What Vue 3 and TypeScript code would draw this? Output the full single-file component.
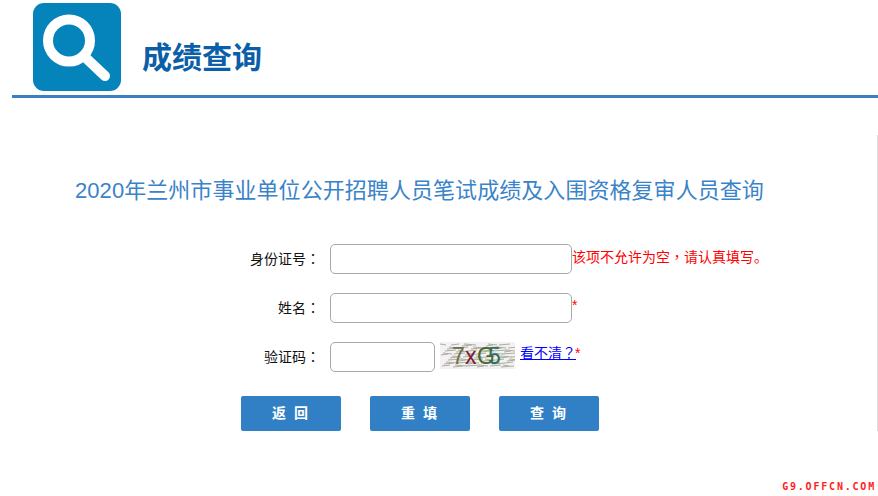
<script setup lang="ts">
const rows = [
  { label: '身份证号', star: false },
  { label: '姓名', star: true },
]
const buttons = ['返 回', '重 填', '查 询']

// captcha background scratches, deterministic so the picture stays the same
const noise = Array.from({ length: 70 }, (_, i) => {
  const x = (i * 37) % 72
  const y = 2 + ((i * 23) % 24)
  return { id: i, d: `M${x} ${y}l${6 + (i % 9)} ${i % 3 === 0 ? 1 : -1}` }
})
</script>

<template>
  <div class="page">
    <header class="header">
      <svg class="logo" viewBox="0 0 88 88" aria-hidden="true">
        <rect width="88" height="88" rx="11" fill="#0583bb" />
        <circle cx="36" cy="37.5" r="21" fill="none" stroke="#fff" stroke-width="10" />
        <path d="M54 56 L72 73" stroke="#fff" stroke-width="10" stroke-linecap="round" />
      </svg>
      <h1 class="brand">成绩查询</h1>
    </header>

    <main class="panel">
      <h2 class="title">2020年兰州市事业单位公开招聘人员笔试成绩及入围资格复审人员查询</h2>

      <form class="form" @submit.prevent>
        <div v-for="row in rows" :key="row.label" class="row">
          <label class="label">{{ row.label }}<span class="punct">：</span></label>
          <input class="field" type="text" />
          <span v-if="row.star" class="star">*</span>
          <span v-else class="note">该项不允许为空<span class="punct">，</span>请认真填写。</span>
        </div>
        <div class="row">
          <label class="label">验证码<span class="punct">：</span></label>
          <input class="field short" type="text" />
          <svg class="captcha" viewBox="0 0 75 27" aria-label="验证码图片">
            <rect width="75" height="27" fill="#f5f0f5" />
            <path v-for="n in noise" :key="n.id" :d="n.d" stroke="#a9b09c" stroke-width="1" />
            <text x="12" y="22" font-size="23" fill="#6b6f4a" class="code">7</text>
            <text x="25" y="22" font-size="23" fill="#7a1c34" class="code">x</text>
            <text x="37" y="22" font-size="23" fill="#46682c" class="code">G</text>
            <text x="48" y="22" font-size="23" fill="#2f6f5c" class="code">5</text>
          </svg>
          <a class="refresh" href="#">看不清<span class="punct">？</span></a>
          <span class="star inline">*</span>
        </div>
        <div class="actions">
          <button v-for="b in buttons" :key="b" class="btn" type="button">{{ b }}</button>
        </div>
      </form>
    </main>

    <footer class="mark">G9.OFFCN.COM</footer>
  </div>
</template>

<style>
html,
body {
  margin: 0;
  background: #fff;
}
</style>

<style scoped>
.page {
  width: 878px;
  height: 496px;
  overflow: hidden;
  display: flex;
  flex-direction: column;
  font-family: "Liberation Sans", "Noto Sans CJK SC", sans-serif;
  color: #111;
}

.header {
  margin-left: 12px;
  padding: 3px 0 0 21px;
  height: 92px;
  display: flex;
  border-bottom: 3px solid #3a7fc1;
}

.logo {
  width: 88px;
  height: 88px;
  flex: none;
}

.brand {
  margin: 36px 0 0 21px;
  font-size: 30px;
  line-height: 38px;
  font-weight: 700;
  color: #0b5ea8;
}

.panel {
  margin-top: 37px;
  height: 296px;
  border-right: 1px solid #ddd;
  width: 877px;
}

.title {
  margin: 0;
  padding: 43px 0 0 75px;
  font-size: 22px;
  line-height: 26px;
  font-weight: 400;
  letter-spacing: 0.06px;
  color: #3a83c8;
  white-space: nowrap;
}

.form {
  margin-top: 40px;
  display: flex;
  flex-direction: column;
  gap: 19px;
}

.row {
  display: flex;
  align-items: flex-start;
  height: 30px;
}

.label {
  width: 320px;
  flex: none;
  text-align: right;
  font-size: 14px;
  line-height: 28px;
}

/* these glyphs sit centred in their box in the reference */
.punct {
  font-family: "Noto Sans CJK TC", sans-serif;
}

.field {
  margin: 0 0 0 10px;
  width: 242px;
  height: 30px;
  box-sizing: border-box;
  border: 1px solid #a9a9a9;
  border-radius: 5px;
  background: #fff;
  padding: 0 6px;
  flex: none;
}

.field.short {
  width: 105px;
}

.note {
  font-size: 14px;
  line-height: 24px;
  color: #f00;
  white-space: nowrap;
}

.star {
  font-size: 14px;
  line-height: 25px;
  color: #f00;
}

.star.inline {
  margin-left: -1px;
  line-height: 23px;
}

.captcha {
  margin-left: 5px;
  width: 75px;
  height: 27px;
  flex: none;
}

.code {
  font-family: "Liberation Sans", sans-serif;
}

.refresh {
  margin-left: 5px;
  font-size: 14px;
  line-height: 20px;
  color: #00f;
}

.actions {
  margin: 5px 0 0 241px;
  display: flex;
  gap: 29px;
}

.btn {
  width: 100px;
  height: 35px;
  padding: 0 0 3px;
  border: none;
  border-radius: 2px;
  background: #3180c6;
  color: #fff;
  font-family: inherit;
  font-size: 14px;
  font-weight: 700;
  letter-spacing: 2px;
  white-space: pre;
}

.mark {
  margin: auto 0 4px auto;
  padding-right: 2px;
  font-family: "DejaVu Sans Mono", monospace;
  font-size: 10px;
  line-height: 10px;
  font-weight: 700;
  letter-spacing: 1.8px;
  color: #f22;
}
</style>
